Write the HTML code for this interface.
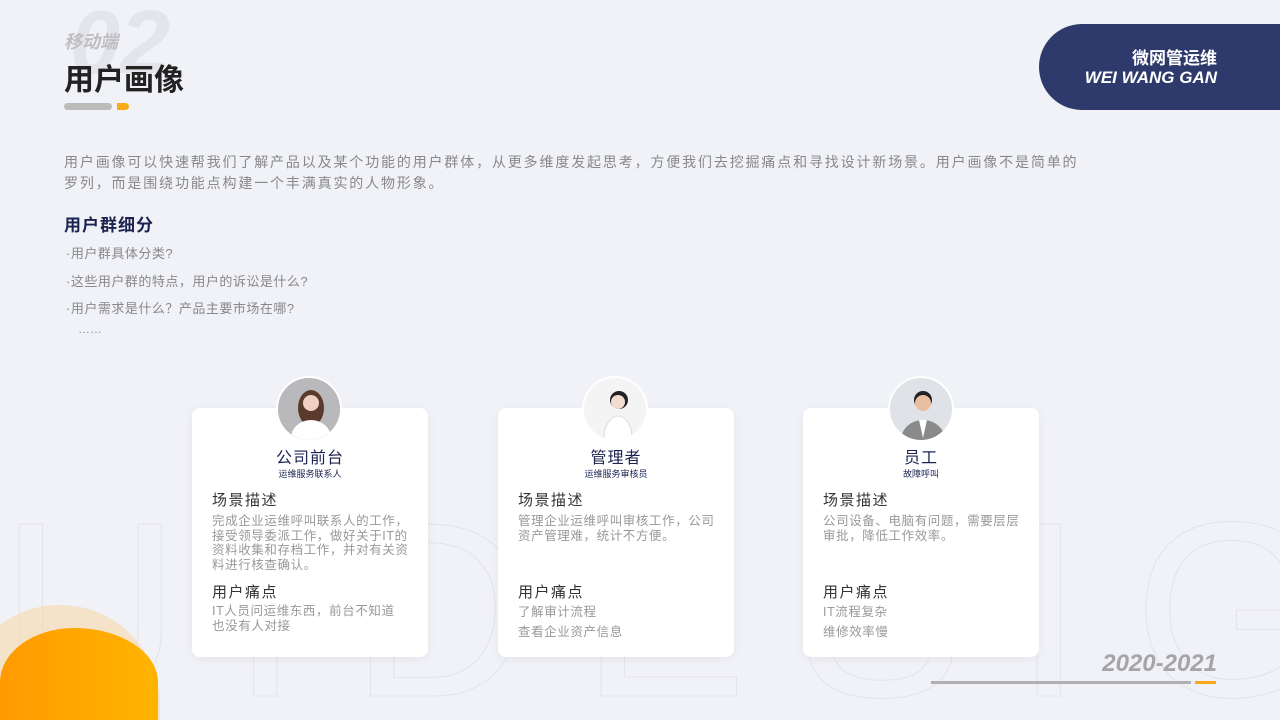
<!DOCTYPE html>
<html><head><meta charset="utf-8"><style>
*{margin:0;padding:0;box-sizing:border-box}
html,body{width:1280px;height:720px;overflow:hidden}
body{background:#f1f2f7;font-family:"Liberation Sans","Noto Sans CJK SC",sans-serif;position:relative}
.abs{position:absolute}
.card{position:absolute;top:408px;width:236px;height:249px;background:#fff;border-radius:8px;box-shadow:0 2px 10px rgba(0,0,0,0.06)}
.av{position:absolute;top:376px;width:66px;height:66px;border-radius:50%;background:#c9ccd2;border:2px solid #fff;overflow:hidden}
.name{position:absolute;top:36px;width:100%;text-align:center;font-size:16px;color:#1b2350;letter-spacing:1px}
.role{position:absolute;top:59px;width:100%;text-align:center;font-size:9px;color:#1b2350}
.h{position:absolute;left:20px;font-size:15px;color:#333;letter-spacing:1.5px}
.p{position:absolute;left:20px;width:200px;font-size:12.5px;line-height:14.5px;color:#999;letter-spacing:0.6px}
</style></head><body>
<div class="abs" style="left:0;top:475px;width:1280px;height:245px;overflow:hidden"><div style="font-size:250px;color:transparent;-webkit-text-stroke:1px #e2e3e8;letter-spacing:50px;line-height:1;white-space:nowrap;margin-top:10px">UIDESIGN</div></div>
<div class="abs" style="left:70px;top:-8px;font-size:90px;font-weight:bold;font-style:italic;color:#e4e5ea">02</div>
<div class="abs" style="left:64px;top:28px;font-size:18px;font-weight:bold;font-style:italic;color:#bfbfc3">移动端</div>
<div class="abs" style="left:64px;top:55px;font-size:30px;font-weight:bold;color:#222">用户画像</div>
<div class="abs" style="left:64px;top:103px;width:48px;height:7px;background:#bbb;border-radius:4px"></div>
<div class="abs" style="left:117px;top:103px;width:12px;height:7px;background:#f7ab1a;border-radius:0 4px 4px 0"></div>
<div class="abs" style="left:1039px;top:24px;width:241px;height:86px;background:#2e3a6b;border-radius:43px 0 0 43px"></div>
<div class="abs" style="left:1079px;top:44px;width:138px;text-align:right;color:#fff;font-size:17px;font-weight:bold">微网管运维</div>
<div class="abs" style="left:1070px;top:68px;width:147px;text-align:right;color:#fff;font-size:17px;font-weight:bold;font-style:italic">WEI WANG GAN</div>
<div class="abs" style="left:64px;top:152px;width:1150px;font-size:14px;line-height:21px;color:#888;letter-spacing:1.85px;white-space:nowrap">用户画像可以快速帮我们了解产品以及某个功能的用户群体，从更多维度发起思考，方便我们去挖掘痛点和寻找设计新场景。用户画像不是简单的<br>罗列，而是围绕功能点构建一个丰满真实的人物形象。</div>
<div class="abs" style="left:64px;top:211px;font-size:17px;font-weight:bold;color:#1b2350;letter-spacing:1px">用户群细分</div>
<div class="abs" style="left:66px;top:240px;font-size:13px;line-height:27.5px;color:#888;letter-spacing:0.5px">·用户群具体分类?<br>·这些用户群的特点，用户的诉讼是什么?<br>·用户需求是什么？产品主要市场在哪?</div>
<div class="abs" style="left:78px;top:322px;font-size:12px;color:#888">……</div>
<div class="abs" style="left:-40px;top:605px;width:200px;height:115px;border-radius:100px 100px 0 0;background:#f7d9a8;opacity:.6"></div>
<div class="abs" style="left:0;top:628px;width:158px;height:92px;border-radius:80% 90% 0 0/100% 100% 0 0;background:linear-gradient(90deg,#ff9a00,#ffb400)"></div>

<div class="card" style="left:192px"><div class="name">公司前台</div><div class="role">运维服务联系人</div>
<div class="h" style="top:81px">场景描述</div><div class="p" style="top:106px">完成企业运维呼叫联系人的工作，接受领导委派工作，做好关于IT的资料收集和存档工作，并对有关资料进行核查确认。</div>
<div class="h" style="top:173px">用户痛点</div><div class="p" style="top:196px;width:192px">IT人员问运维东西，前台不知道也没有人对接</div></div>
<div class="card" style="left:498px"><div class="name">管理者</div><div class="role">运维服务审核员</div>
<div class="h" style="top:81px">场景描述</div><div class="p" style="top:106px">管理企业运维呼叫审核工作，公司资产管理难，统计不方便。</div>
<div class="h" style="top:173px">用户痛点</div><div class="p" style="line-height:20px;top:194px">了解审计流程<br>查看企业资产信息</div></div>
<div class="card" style="left:803px"><div class="name">员工</div><div class="role">故障呼叫</div>
<div class="h" style="top:81px">场景描述</div><div class="p" style="top:106px">公司设备、电脑有问题，需要层层审批，降低工作效率。</div>
<div class="h" style="top:173px">用户痛点</div><div class="p" style="top:194px;line-height:20px">IT流程复杂<br>维修效率慢</div></div>

<div class="av" style="left:276px"><svg width="66" height="66"><rect width="66" height="66" fill="#b9b9bb"/><ellipse cx="33" cy="30" rx="13" ry="18" fill="#5a3a2a"/><circle cx="33" cy="25" r="8" fill="#f0d0c0"/><ellipse cx="33" cy="60" rx="20" ry="18" fill="#fff"/></svg></div>
<div class="av" style="left:582px;background:#f4f4f4"><svg width="66" height="66"><circle cx="35" cy="22" r="9" fill="#222"/><circle cx="34" cy="24" r="7" fill="#f2dcd0"/><ellipse cx="34" cy="60" rx="14" ry="22" fill="#fff" stroke="#ddd"/></svg></div>
<div class="av" style="left:888px;background:#dfe2e6"><svg width="66" height="66"><circle cx="33" cy="22" r="9" fill="#222"/><circle cx="33" cy="25" r="8" fill="#e8c0a0"/><ellipse cx="33" cy="62" rx="22" ry="20" fill="#8a8a8a"/><path d="M29 42 L33 60 L37 42Z" fill="#fff"/></svg></div>

<div class="abs" style="left:1060px;top:650px;width:157px;text-align:right;font-size:24px;font-weight:bold;font-style:italic;color:#a5a5a8">2020-2021</div>
<div class="abs" style="left:931px;top:681px;width:260px;height:3px;background:#b0b0b3"></div>
<div class="abs" style="left:1195px;top:681px;width:21px;height:3px;background:#f7a81a"></div>
</body></html>
